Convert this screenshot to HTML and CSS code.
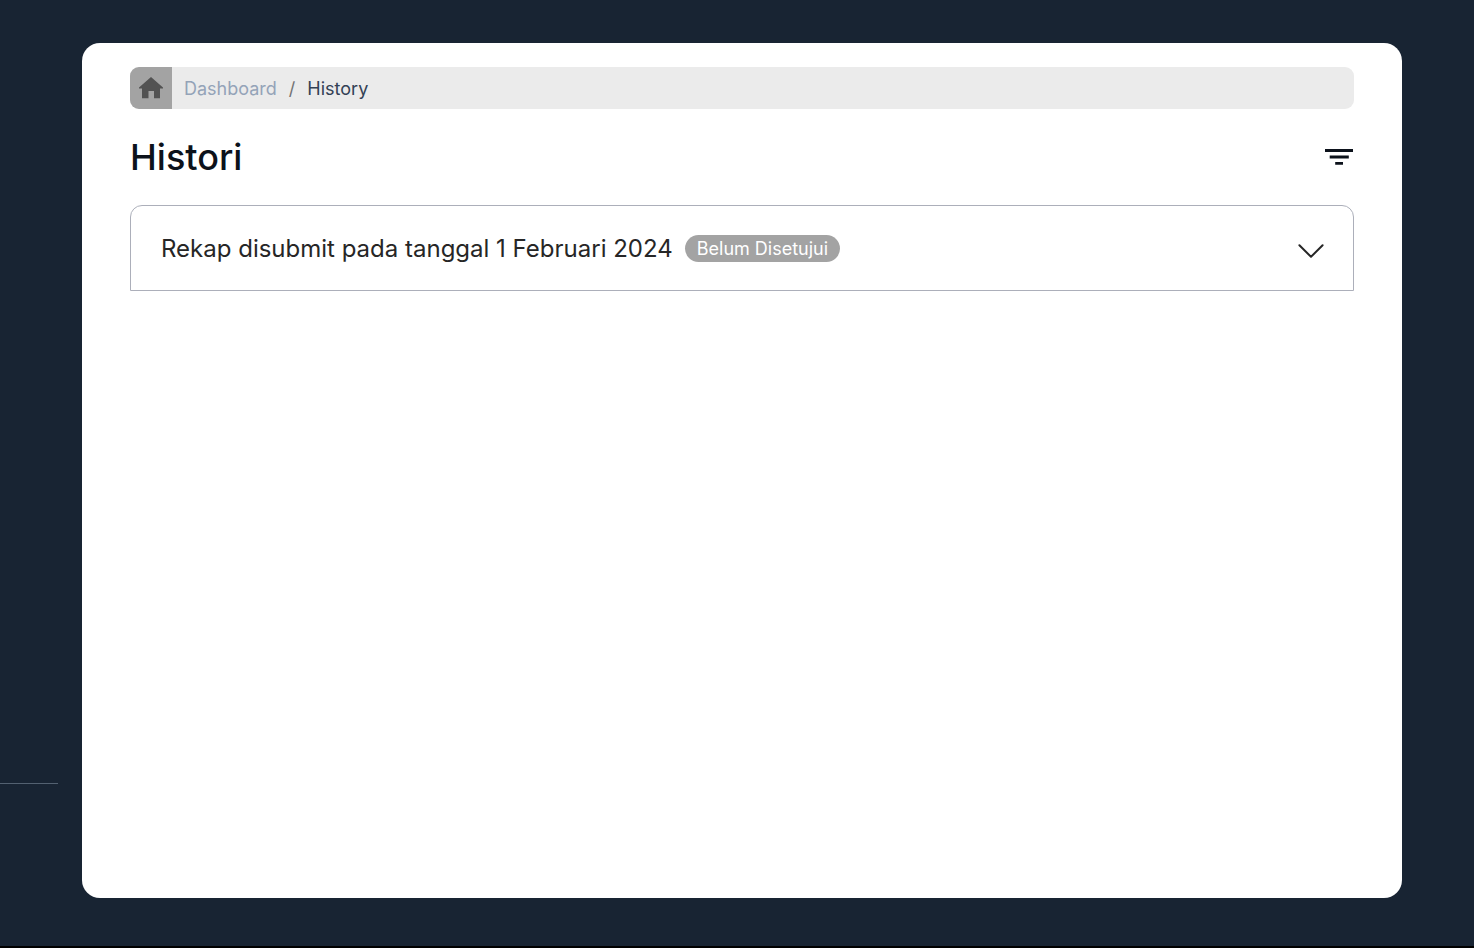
FILE: index.html
```html
<!DOCTYPE html>
<html lang="id">
<head>
<meta charset="utf-8">
<meta name="viewport" content="width=device-width, initial-scale=1">
<title>Histori</title>
<link rel="stylesheet" href="styles.css">
</head>
<body>
<div class="layout">
  <aside class="sidebar"><hr class="sidebar-divider"></aside>
  <main class="panel">
    <nav class="breadcrumb" aria-label="Breadcrumb">
      <a class="breadcrumb-home" href="#" aria-label="Home">
        <svg width="24" height="22" viewBox="0 0 24 22" fill="currentColor" aria-hidden="true"><path d="M12 0 24 10.500V11.500H21V21.300H15V14H9.500V21.300H3V11.500H0V10.500z"/></svg>
      </a>
      <ol class="breadcrumb-list">
        <li><a class="breadcrumb-link" href="#">Dashboard</a></li>
        <li class="breadcrumb-separator" aria-hidden="true">/</li>
        <li class="breadcrumb-current" aria-current="page">History</li>
      </ol>
    </nav>
    <header class="heading">
      <h1 class="title">Histori</h1>
      <button class="filter" type="button" aria-label="Filter">
        <svg width="28" height="18" viewBox="0 0 28 18" fill="currentColor" aria-hidden="true"><path d="M0 1h28v3H0zM4.7 7.4h19.1v3H4.700zM10.2 14.100h7.800v2.700h-7.800z"/></svg>
      </button>
    </header>
    <section class="accordion">
      <button class="accordion-toggle" type="button" aria-expanded="false">
        <span class="accordion-title">Rekap disubmit pada tanggal 1 Februari 2024</span>
        <span class="badge">Belum Disetujui</span>
        <svg class="chevron" width="27" height="22" viewBox="0 0 27 22" fill="none" stroke="currentColor" stroke-width="2" stroke-linecap="round" stroke-linejoin="round" aria-hidden="true"><path d="M1.400 8.200 13 19.800 24.600 8.200"/></svg>
      </button>
    </section>
  </main>
</div>
</body>
</html>
```
FILE: styles.css
```css
* {
  box-sizing: border-box;
}

body {
  margin: 0;
  background: #182433;
  color: #0c121b;
  font-family: Inter, "Liberation Sans", sans-serif;
}

.layout {
  display: flex;
  gap: 24px;
  min-height: 100vh;
  border-bottom: 2px solid #000;
}

.sidebar {
  display: flex;
  flex: 0 0 58px;
  flex-direction: column;
  justify-content: flex-end;
  padding-bottom: 162px;
}

.sidebar-divider {
  width: 100%;
  margin: 0;
  border: 0;
  border-top: 1px solid #536171;
}

.panel {
  flex: 1;
  min-width: 0;
  margin: 43px 72px 48px 0;
  padding: 24px 48px;
  border-radius: 18px;
  background: #fff;
}

.breadcrumb {
  display: flex;
  min-height: 42px;
  overflow: hidden;
  border-radius: 9px;
  background: #ebebeb;
  font-size: 18px;
  line-height: 24px;
}

.breadcrumb-home {
  display: flex;
  flex: 0 0 42px;
  align-items: center;
  justify-content: center;
  background: #a3a3a3;
  color: #525252;
}

.breadcrumb-list {
  display: flex;
  align-items: center;
  gap: 12px;
  margin: 0;
  padding: 2px 12px 0;
  list-style: none;
}

.breadcrumb-link {
  color: #94a3b8;
  text-decoration: none;
}

.breadcrumb-separator {
  color: #737373;
}

.breadcrumb-current {
  color: #334155;
}

.heading {
  display: flex;
  align-items: center;
  justify-content: space-between;
  margin: 24px 0;
}

.title {
  margin: 0;
  font-size: 36px;
  font-weight: 500;
  line-height: 48px;
}

.filter {
  display: flex;
  padding: 0 1px;
  border: 0;
  background: none;
  color: inherit;
  cursor: pointer;
}

.accordion {
  border: 1px solid #acafba;
  border-radius: 12px 12px 0 0;
}

.accordion-toggle {
  display: flex;
  align-items: center;
  gap: 12px;
  width: 100%;
  min-height: 84px;
  padding: 22px 28px 22px 30px;
  border: 0;
  background: none;
  color: #262626;
  font: inherit;
  text-align: left;
  cursor: pointer;
}

.accordion-title {
  padding-top: 2px;
  font-size: 24px;
  line-height: 36px;
}

.badge {
  padding: 0 12px;
  border-radius: 14px;
  background: #a3a3a3;
  color: #fff;
  font-size: 18px;
  line-height: 27px;
  white-space: nowrap;
}

.chevron {
  flex: none;
  margin-left: auto;
}
```
